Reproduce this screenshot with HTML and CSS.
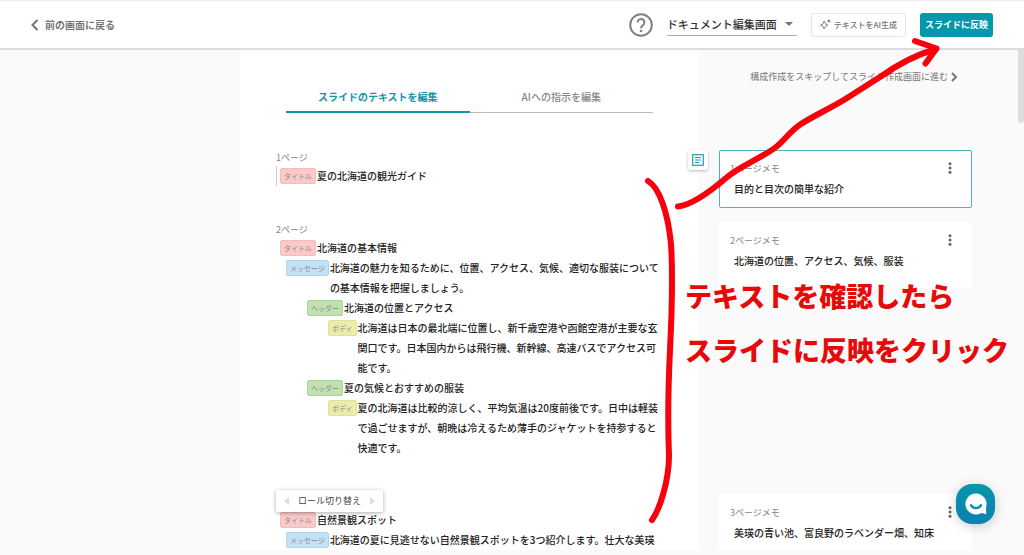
FILE: index.html
```html
<!DOCTYPE html>
<html lang="ja">
<head>
<meta charset="utf-8">
<meta name="viewport" content="width=device-width, initial-scale=1">
<title>ドキュメント編集画面</title>
<link rel="stylesheet" href="styles.css">
</head>
<body>
<header class="topbar">
  <a class="back" href="#">
    <svg width="8" height="12" viewBox="0 0 8 12" fill="none" stroke="currentColor" stroke-width="2"><path d="M6.5 1 1.5 6l5 5"/></svg>
    前の画面に戻る
  </a>
  <div class="actions">
    <button class="help" type="button" aria-label="ヘルプ">
      <svg width="24" height="24" viewBox="0 0 24 24" fill="none" stroke="currentColor" stroke-width="2"><circle cx="12" cy="12" r="10.8"/><path d="M8.6 9.400a3.400 3.400 0 1 1 5.500 2.600c-1.200 1-2.100 1.600-2.100 3.200"/><circle cx="12" cy="18" r="1.3" fill="currentColor" stroke="none"/></svg>
    </button>
    <div class="picker">
      <select aria-label="画面の切り替え"><option>ドキュメント編集画面</option></select>
      <svg class="caret" width="8" height="4" viewBox="0 0 8 4"><path d="M0 0h8L4 4z" fill="currentColor"/></svg>
    </div>
    <button class="btn btn-outline" type="button">
      <svg width="11" height="11" viewBox="0 0 11 11" fill="none" stroke="currentColor" stroke-width="1"><path d="M4.2 2.2Q5 5.200 7.700 6 5 6.800 4.200 9.800 3.400 6.800.700 6 3.400 5.200 4.200 2.200zM8.900.3v3.400M7.200 2h3.400"/></svg>
      テキストをAI生成
    </button>
    <button class="btn btn-primary" type="button">スライドに反映</button>
  </div>
</header>

<main class="workspace">
  <div class="paper"></div>
  <nav class="tabs">
    <button class="tab tab-active" type="button">スライドのテキストを編集</button>
    <button class="tab" type="button">AIへの指示を編集</button>
  </nav>
  <a class="skip" href="#">
    構成作成をスキップしてスライド作成画面に進む
    <svg width="7" height="10" viewBox="0 0 7 10" fill="none" stroke="currentColor" stroke-width="2"><path d="M1 1l4 4-4 4"/></svg>
  </a>

  <section class="page row-first">
    <h2 class="page-label">1ページ</h2>
    <div class="line line-current"><span class="role role-title">タイトル</span><p>夏の北海道の観光ガイド</p></div>
    <button class="memo-toggle" type="button" aria-label="メモ">
      <svg width="12" height="12" viewBox="0 0 12 12" fill="none" stroke="currentColor"><rect x=".7" y=".7" width="10.600" height="10.600" stroke-width="1.200"/><path d="M3 3.500h6M3 6h6M3 8.500h4"/></svg>
    </button>
  </section>
  <article class="memo memo-active row-first">
    <h3>1ページメモ</h3>
    <p>目的と目次の簡単な紹介</p>
    <button class="more" type="button" aria-label="メニュー"><svg width="4" height="12" viewBox="0 0 4 12" fill="currentColor"><circle cx="2" cy="1.700" r="1.500"/><circle cx="2" cy="6" r="1.500"/><circle cx="2" cy="10.300" r="1.500"/></svg></button>
  </article>

  <section class="page row-second">
    <h2 class="page-label">2ページ</h2>
    <div class="line"><span class="role role-title">タイトル</span><p>北海道の基本情報</p></div>
    <div class="line level-message"><span class="role role-message">メッセージ</span><p>北海道の魅力を知るために、位置、アクセス、気候、適切な服装についての基本情報を把握しましょう。</p></div>
    <div class="line level-header"><span class="role role-header">ヘッダー</span><p>北海道の位置とアクセス</p></div>
    <div class="line level-body"><span class="role role-body">ボディ</span><p>北海道は日本の最北端に位置し、新千歳空港や函館空港が主要な玄関口です。日本国内からは飛行機、新幹線、高速バスでアクセス可能です。</p></div>
    <div class="line level-header"><span class="role role-header">ヘッダー</span><p>夏の気候とおすすめの服装</p></div>
    <div class="line level-body"><span class="role role-body">ボディ</span><p>夏の北海道は比較的涼しく、平均気温は20度前後です。日中は軽装で過ごせますが、朝晩は冷えるため薄手のジャケットを持参すると快適です。</p></div>
  </section>
  <article class="memo memo-tall row-second">
    <h3>2ページメモ</h3>
    <p>北海道の位置、アクセス、気候、服装</p>
    <button class="more" type="button" aria-label="メニュー"><svg width="4" height="12" viewBox="0 0 4 12" fill="currentColor"><circle cx="2" cy="1.700" r="1.500"/><circle cx="2" cy="6" r="1.500"/><circle cx="2" cy="10.300" r="1.500"/></svg></button>
  </article>

  <section class="page page-spaced row-third">
    <div class="role-switch">
      <button type="button" aria-label="前のロール"><svg width="5" height="8" viewBox="0 0 5 8"><path d="M5 0v8L0 4z" fill="currentColor"/></svg></button>
      <span>ロール切り替え</span>
      <button type="button" aria-label="次のロール"><svg width="5" height="8" viewBox="0 0 5 8"><path d="M0 0v8l5-4z" fill="currentColor"/></svg></button>
    </div>
    <div class="line"><span class="role role-title">タイトル</span><p>自然景観スポット</p></div>
    <div class="line level-message"><span class="role role-message">メッセージ</span><p>北海道の夏に見逃せない自然景観スポットを3つ紹介します。壮大な美瑛</p></div>
  </section>
  <article class="memo memo-tall row-third">
    <h3>3ページメモ</h3>
    <p>美瑛の青い池、富良野のラベンダー畑、知床</p>
    <button class="more" type="button" aria-label="メニュー"><svg width="4" height="12" viewBox="0 0 4 12" fill="currentColor"><circle cx="2" cy="1.700" r="1.500"/><circle cx="2" cy="6" r="1.500"/><circle cx="2" cy="10.300" r="1.500"/></svg></button>
  </article>
  <div class="scroll-thumb"></div>
</main>

<button class="chat" type="button" aria-label="チャット">
  <svg width="22" height="22" viewBox="0 0 22 22"><path d="M11 .5a10.500 10.500 0 1 0 5.500 19.400L21.300 21.200 21 14.500A10.500 10.500 0 0 0 11 .5z" fill="#fff"/><path d="M6 12.300c2.600 3.700 7.400 3.700 10 0" fill="none" stroke="#068fac" stroke-width="2.400" stroke-linecap="round"/></svg>
</button>

<svg class="marks" width="1024" height="555" viewBox="0 0 1024 555" fill="none" stroke="#f8000c" stroke-width="6" stroke-linecap="round" stroke-linejoin="round">
  <path d="M648 181C660 188 668 214 671 244C673 275 672 310 670 350C668 390 668 430 669 456C669 480 660 509 652 520"/>
  <path d="M678 206.500C692 205 712 190 726 178C740 166 762 158 776 147C785 140 790 131 801 124C815 115 833 107 847 98L880 77C897 65 915 55 936 49"/>
  <path d="M915 41L936.500 48.500L925.500 63.500"/>
</svg>
<p class="caption">テキストを確認したら<br>スライドに反映をクリック</p>
</body>
</html>
```

FILE: styles.css
```css
* {
  box-sizing: border-box;
}

body {
  margin: 0;
  height: 100vh;
  display: flex;
  flex-direction: column;
  overflow: hidden;
  position: relative;
  background: #fafafa;
  color: #222;
  font: 10px/20px "Noto Sans CJK JP", "Noto Sans", sans-serif;
}

h2, h3, p {
  margin: 0;
  font-weight: 400;
}

a {
  color: inherit;
  text-decoration: none;
}

button {
  padding: 0;
  border: 0;
  background: none;
  color: inherit;
  font: inherit;
}

svg {
  display: block;
  flex: none;
}

/* Top bar */
.topbar {
  display: flex;
  justify-content: space-between;
  align-items: center;
  flex: none;
  height: 50px;
  padding: 0 31px;
  background: #fff;
  border-top: 1px solid #eee;
  border-bottom: 2px solid #ddd;
}

.back {
  display: flex;
  align-items: center;
  gap: 6px;
  color: #757575;
  font-weight: 700;
}

.actions {
  display: flex;
  align-items: center;
  gap: 14px;
}

.help {
  color: #808080;
}

.picker {
  display: flex;
  align-items: center;
  gap: 8px;
  height: 22px;
  padding-right: 4px;
  border-bottom: 1px solid #aaa;
  color: #757575;
}

.picker select {
  appearance: none;
  border: 0;
  padding: 0;
  background: none;
  color: #333;
  font: 500 11px/20px "Noto Sans CJK JP", "Noto Sans", sans-serif;
}

.btn {
  display: flex;
  align-items: center;
  gap: 3px;
  height: 24px;
  border-radius: 3px;
}

.btn-outline {
  padding: 0 8px;
  border: 1px solid #e4e4e4;
  color: #757575;
  font-size: 8px;
  font-weight: 500;
}

.btn-primary {
  padding: 0 5px;
  background: #0797aa;
  color: #fff;
  font-size: 9px;
  font-weight: 700;
}

/* Document and memo columns */
.workspace {
  flex: 1;
  min-height: 0;
  margin-bottom: 5px;
  overflow: hidden;
  position: relative;
  display: grid;
  grid-template-columns: 240px 1fr 325px;
  grid-template-rows: 100px max-content max-content 1fr;
}

.row-first {
  grid-row: 2;
}

.row-second {
  grid-row: 3;
}

.row-third {
  grid-row: 4;
}

.paper {
  grid-column: 2;
  grid-row: 1 / -1;
  background: #fff;
}

.tabs {
  grid-column: 2;
  grid-row: 1;
  display: flex;
  align-self: start;
  padding: 32px 46px 0;
}

.tab {
  flex: 1;
  height: 31px;
  border-bottom: 1px solid #bbb;
  color: #858585;
  font-weight: 500;
}

.tab-active {
  border-bottom: 2px solid #1495a6;
  color: #1495a6;
  font-weight: 700;
}

.skip {
  grid-column: 3;
  grid-row: 1;
  display: flex;
  align-items: center;
  justify-content: flex-end;
  align-self: start;
  gap: 3px;
  padding: 17px 66px 0 0;
  color: #757575;
  font-size: 9px;
  white-space: nowrap;
}

.page {
  grid-column: 2;
  position: relative;
  padding: 0 37px 36px 36px;
}

.page-spaced {
  padding: 16px 37px 0 36px;
}

.page-label {
  color: #858585;
  font-size: 9px;
  line-height: 16px;
}

.line {
  display: flex;
  align-items: flex-start;
  gap: 1px;
  padding-left: 4px;
}

.line p {
  font-weight: 500;
}

.line-current {
  padding-left: 3px;
  border-left: 1px solid #ccc;
}

.level-message {
  padding-left: 10px;
}

.level-header {
  padding-left: 31px;
}

.level-body {
  padding-left: 52px;
}

.role {
  flex: none;
  margin-top: 2px;
  padding: 0 3px;
  border: 1px solid;
  border-radius: 2px;
  color: #8a8a8a;
  font-size: 7px;
  line-height: 14px;
}

.role-title {
  background: #fbc9c9;
  border-color: #f2bcbc;
}

.role-message {
  background: #c3e1f5;
  border-color: #afd5ed;
}

.role-header {
  background: #bfe2b0;
  border-color: #abd49a;
}

.role-body {
  background: #ebedab;
  border-color: #dfe19a;
}

.memo-toggle {
  position: absolute;
  top: 0;
  right: -9px;
  display: grid;
  place-items: center;
  width: 20px;
  height: 20px;
  border-radius: 3px;
  background: #fff;
  box-shadow: 0 1px 3px #0004;
  color: #1d9fb0;
}

.role-switch {
  position: absolute;
  top: -4px;
  left: 36px;
  z-index: 1;
  display: flex;
  align-items: center;
  justify-content: space-between;
  width: 107px;
  height: 22px;
  padding: 0 8px;
  border-radius: 2px;
  background: #fff;
  box-shadow: 0 1px 4px #0005;
  color: #444;
  font-size: 9px;
}

.role-switch button {
  color: #ddd;
}

.memo {
  grid-column: 3;
  align-self: start;
  position: relative;
  margin: 0 52px 0 20px;
  min-height: 58px;
  padding: 8px 10px;
  border: 1px solid #fff;
  border-radius: 2px;
  background: #fff;
}

.memo-active {
  border-color: #4db3bd;
}

.memo-tall {
  min-height: 66px;
}

.memo h3 {
  color: #858585;
  font-size: 9px;
}

.memo p {
  padding-left: 4px;
  font-weight: 500;
}

.more {
  position: absolute;
  top: 11px;
  right: 19px;
  color: #666;
}

.scroll-thumb {
  position: absolute;
  top: 0;
  right: 0;
  width: 6px;
  height: 73px;
  border-radius: 0 0 3px 3px;
  background: #ddd;
}

.chat {
  position: absolute;
  right: 29px;
  bottom: 31px;
  display: grid;
  place-items: center;
  width: 39px;
  height: 40px;
  border-radius: 16px;
  background: linear-gradient(#0797a8, #0a80b0);
  box-shadow: 0 2px 12px #0003;
}

/* Hand-drawn guidance over the screen */
.marks {
  position: absolute;
  top: 0;
  left: 0;
  pointer-events: none;
}

.caption {
  position: absolute;
  top: 269px;
  left: 685px;
  color: #e60a0a;
  font-size: 27px;
  line-height: 54px;
  font-weight: 900;
  white-space: nowrap;
  pointer-events: none;
}
```
